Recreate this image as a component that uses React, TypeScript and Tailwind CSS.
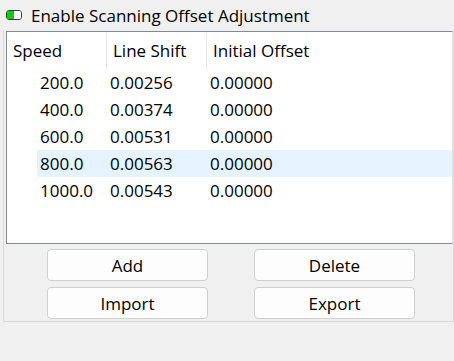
import React from 'react';

const rows = [
  { speed: '200.0', shift: '0.00256', offset: '0.00000' },
  { speed: '400.0', shift: '0.00374', offset: '0.00000' },
  { speed: '600.0', shift: '0.00531', offset: '0.00000' },
  { speed: '800.0', shift: '0.00563', offset: '0.00000', selected: true },
  { speed: '1000.0', shift: '0.00543', offset: '0.00000' },
];

function Toggle() {
  return (
    <div className="flex h-[10px] w-[16px] overflow-hidden rounded-[3px] border border-[#3c3c3c]">
      <div className="w-1/2 bg-[#00d000]" />
      <div className="w-1/2 bg-white" />
    </div>
  );
}

function Button({ label }: { label: string }) {
  return (
    <button className="h-[32px] w-[161px] rounded-[4px] border border-[#d0d0d0] bg-[#fdfdfd] pt-[1px] text-[17px] text-black">
      {label}
    </button>
  );
}

export default function App() {
  return (
    <div className="h-[361px] w-[454px] overflow-hidden bg-[#f0f0f0] font-['Open_Sans',sans-serif] text-black">
      <div className="flex h-[30px] items-center pl-[6px]">
        <Toggle />
        <span className="ml-[9px] text-[17px] leading-none">Enable Scanning Offset Adjustment</span>
      </div>

      <div className="ml-[3px] h-[291px] border-x border-b border-[#d9d9d9]">
        <div className="ml-[2px] mt-[1px] h-[213px] border-y border-l border-r border-[#858a92] border-r-[#e3e3e3] bg-white">
          <div className="flex h-[37px] items-center pt-[1px] text-[17px]">
            <div className="flex h-full w-[100px] items-center border-r border-[#e5e5e5] pl-[6px]">Speed</div>
            <div className="flex h-full w-[100px] items-center border-r border-[#e5e5e5] pl-[6px]">Line Shift</div>
            <div className="flex h-full items-center pl-[6px]">Initial Offset</div>
          </div>
          {rows.map((r) => (
            <div key={r.speed} className="flex h-[27px] items-center text-[17px]">
              <div className="w-[30px]" />
              <div
                className={`flex h-full flex-1 items-center rounded-[2px] pt-[1px] ${r.selected ? 'bg-[#e5f3ff]' : ''}`}
              >
                <div className="w-[70px] pl-[3px]">{r.speed}</div>
                <div className="w-[100px] pl-[3px]">{r.shift}</div>
                <div className="pl-[3px]">{r.offset}</div>
              </div>
            </div>
          ))}
        </div>

        <div className="mt-[5px] flex flex-col gap-[6px] pl-[43px]">
          <div className="flex gap-[46px]">
            <Button label="Add" />
            <Button label="Delete" />
          </div>
          <div className="flex gap-[46px]">
            <Button label="Import" />
            <Button label="Export" />
          </div>
        </div>
      </div>
    </div>
  );
}
